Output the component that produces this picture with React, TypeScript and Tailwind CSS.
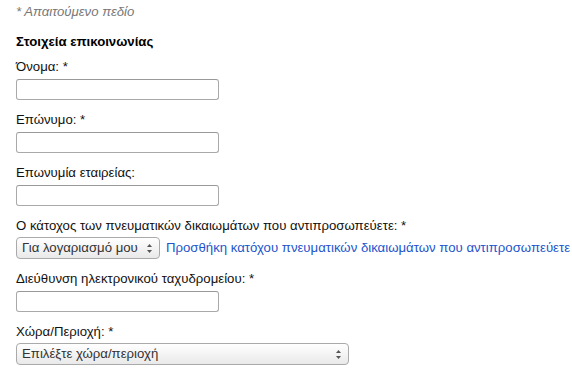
import React from 'react';

const font = { fontFamily: '"Liberation Sans", Arial, sans-serif' };

function Arrows() {
  return (
    <svg width="7" height="11" viewBox="0 0 7 11" className="shrink-0">
      <path d="M3.5 1 L6 4 L1 4 Z" fill="#555" />
      <path d="M3.5 10 L6 7 L1 7 Z" fill="#555" />
    </svg>
  );
}

function Field({ label, className = '' }: { label: string; className?: string }) {
  return (
    <div className={`mb-[12px] ${className}`}>
      <div className="text-[13.2px] leading-[15px] text-[#111] mb-[5px]">{label}</div>
      <input
        type="text"
        className="block w-[203px] h-[21px] border border-[#a9a9a9] border-t-[#999] rounded-[3px] bg-white outline-none"
      />
    </div>
  );
}

function FakeSelect({ text, width }: { text: string; width: string }) {
  return (
    <div
      className={`${width} h-[22px] flex items-center justify-between pl-[5px] pr-[6px] border border-[#aaa] rounded-[4px] bg-gradient-to-b from-white to-[#e9e9e9] text-[13.2px] text-[#333]`}
    >
      <span>{text}</span>
      <Arrows />
    </div>
  );
}

export default function App() {
  return (
    <div className="w-[572px] h-[372px] bg-white pl-[16px] pt-[4px] overflow-hidden" style={font}>
      <div className="text-[13.2px] leading-[15px] italic text-[#777]">* Απαιτούμενο πεδίο</div>
      <div className="mt-[15px] mb-[10px] text-[13.2px] leading-[15px] font-bold text-black">Στοιχεία επικοινωνίας</div>

      <Field label="Όνομα: *" />
      <Field label="Επώνυμο: *" />
      <Field label="Επωνυμία εταιρείας:" />

      <div className="mb-[12px]">
        <div className="text-[13.2px] leading-[15px] text-[#111] mb-[4px]">
          Ο κάτοχος των πνευματικών δικαιωμάτων που αντιπροσωπεύετε: *
        </div>
        <div className="flex items-center gap-[6px] whitespace-nowrap">
          <FakeSelect text="Για λογαριασμό μου" width="w-[144px]" />
          <a href="#" className="text-[13.2px] text-[#2255cc]">
            Προσθήκη κατόχου πνευματικών δικαιωμάτων που αντιπροσωπεύετε
          </a>
        </div>
      </div>

      <Field label="Διεύθυνση ηλεκτρονικού ταχυδρομείου: *" />

      <div>
        <div className="text-[13.2px] leading-[15px] text-[#111] mb-[4px]">Χώρα/Περιοχή: *</div>
        <FakeSelect text="Επιλέξτε χώρα/περιοχή" width="w-[333px]" />
      </div>
    </div>
  );
}
